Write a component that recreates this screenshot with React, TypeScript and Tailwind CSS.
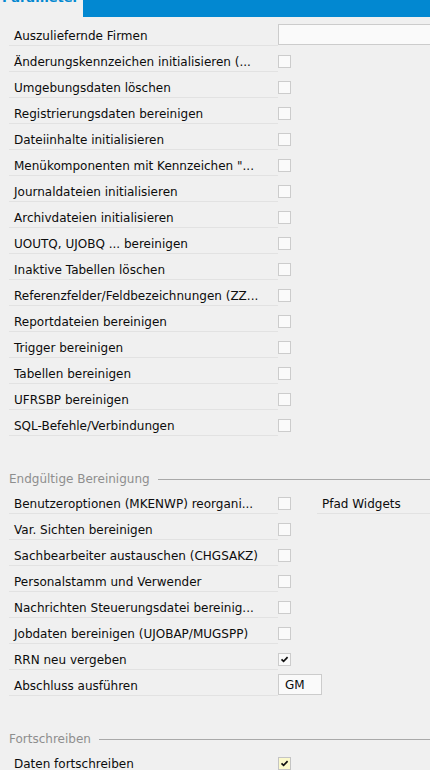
import React from "react";

type Box = "empty" | "checked" | "checkedYellow";

const topRows: string[] = [
  "Änderungskennzeichen initialisieren (...",
  "Umgebungsdaten löschen",
  "Registrierungsdaten bereinigen",
  "Dateiinhalte initialisieren",
  'Menükomponenten mit Kennzeichen "...',
  "Journaldateien initialisieren",
  "Archivdateien initialisieren",
  "UOUTQ, UJOBQ ... bereinigen",
  "Inaktive Tabellen löschen",
  "Referenzfelder/Feldbezeichnungen (ZZ...",
  "Reportdateien bereinigen",
  "Trigger bereinigen",
  "Tabellen bereinigen",
  "UFRSBP bereinigen",
  "SQL-Befehle/Verbindungen",
];

const finalRows: { label: string; box: Box }[] = [
  { label: "Var. Sichten bereinigen", box: "empty" },
  { label: "Sachbearbeiter austauschen (CHGSAKZ)", box: "empty" },
  { label: "Personalstamm und Verwender", box: "empty" },
  { label: "Nachrichten Steuerungsdatei bereinig...", box: "empty" },
  { label: "Jobdaten bereinigen (UJOBAP/MUGSPP)", box: "empty" },
  { label: "RRN neu vergeben", box: "checked" },
];

function Checkbox({ state }: { state: Box }) {
  const bg = state === "checkedYellow" ? "bg-[#fbf9cc] border-[#c4c4c4]" : "bg-[#fafafa] border-[#cccccc]";
  return (
    <div className={`w-[13px] h-[13px] border ${bg} flex items-center justify-center`}>
      {state !== "empty" && (
        <svg width="9" height="9" viewBox="0 0 9 9">
          <path d="M1.5 4.3 L3.6 6.4 L7.6 2.2" fill="none" stroke="#111" strokeWidth="1.7" />
        </svg>
      )}
    </div>
  );
}

function Row({ label, children, right }: { label: string; children?: React.ReactNode; right?: React.ReactNode }) {
  return (
    <div className="flex h-[26px]">
      <div className="ml-[9px] w-[269px] shrink-0 border-b border-[#e2e2e2] pl-[5px] pt-[7px] flex items-center whitespace-nowrap overflow-hidden">
        {label}
      </div>
      <div className="w-[39px] shrink-0 pt-[5px] flex items-center">{children}</div>
      {right}
    </div>
  );
}

function SectionHeader({ title }: { title: string }) {
  return (
    <div className="flex items-center h-[52px] pt-[34px] pl-[9px]">
      <span className="text-[#8e8e8e] whitespace-nowrap">{title}</span>
      <div className="flex-1 h-px bg-[#a9a9a9] ml-[8px]" />
    </div>
  );
}

export default function App() {
  return (
    <div className="w-[430px] h-[770px] overflow-hidden bg-[#f0f0f0] font-['DejaVu_Sans',sans-serif] text-[12px] text-[#0c0c0c]">
      <div className="flex h-[17px] overflow-hidden">
        <div className="w-[83px] shrink-0 pl-[2px] -mt-[9px] font-bold text-[13px] leading-[14px] text-[#0288d1]">
          Parameter
        </div>
        <div className="flex-1 bg-[#0288d1]" />
      </div>

      <div className="mt-[3px]">
        <div className="flex h-[26px]">
          <div className="ml-[9px] w-[269px] shrink-0 border-b border-[#e2e2e2] pl-[5px] pt-[7px] flex items-center whitespace-nowrap">
            Auszuliefernde Firmen
          </div>
          <div className="mt-[4px] h-[21px] flex-1 border border-[#cccccc] bg-[#fafafa] -mr-[10px]" />
        </div>

        {topRows.map((label) => (
          <Row key={label} label={label}>
            <Checkbox state="empty" />
          </Row>
        ))}

        <SectionHeader title="Endgültige Bereinigung" />

        <Row
          label="Benutzeroptionen (MKENWP) reorgani..."
          right={
            <div className="flex-1 border-b border-[#e2e2e2] pl-[5px] pt-[7px] flex items-center whitespace-nowrap">
              Pfad Widgets
            </div>
          }
        >
          <Checkbox state="empty" />
        </Row>

        {finalRows.map((r) => (
          <Row key={r.label} label={r.label}>
            <Checkbox state={r.box} />
          </Row>
        ))}

        <div className="flex h-[26px]">
          <div className="ml-[9px] w-[269px] shrink-0 border-b border-[#e2e2e2] pl-[5px] pt-[7px] flex items-center whitespace-nowrap">
            Abschluss ausführen
          </div>
          <div className="mt-[4px] h-[21px] w-[44px] border border-[#cccccc] bg-[#fafafa] pl-[6px] pt-[1px] flex items-center">
            GM
          </div>
        </div>

        <SectionHeader title="Fortschreiben" />

        <Row label="Daten fortschreiben">
          <Checkbox state="checkedYellow" />
        </Row>
      </div>
    </div>
  );
}
